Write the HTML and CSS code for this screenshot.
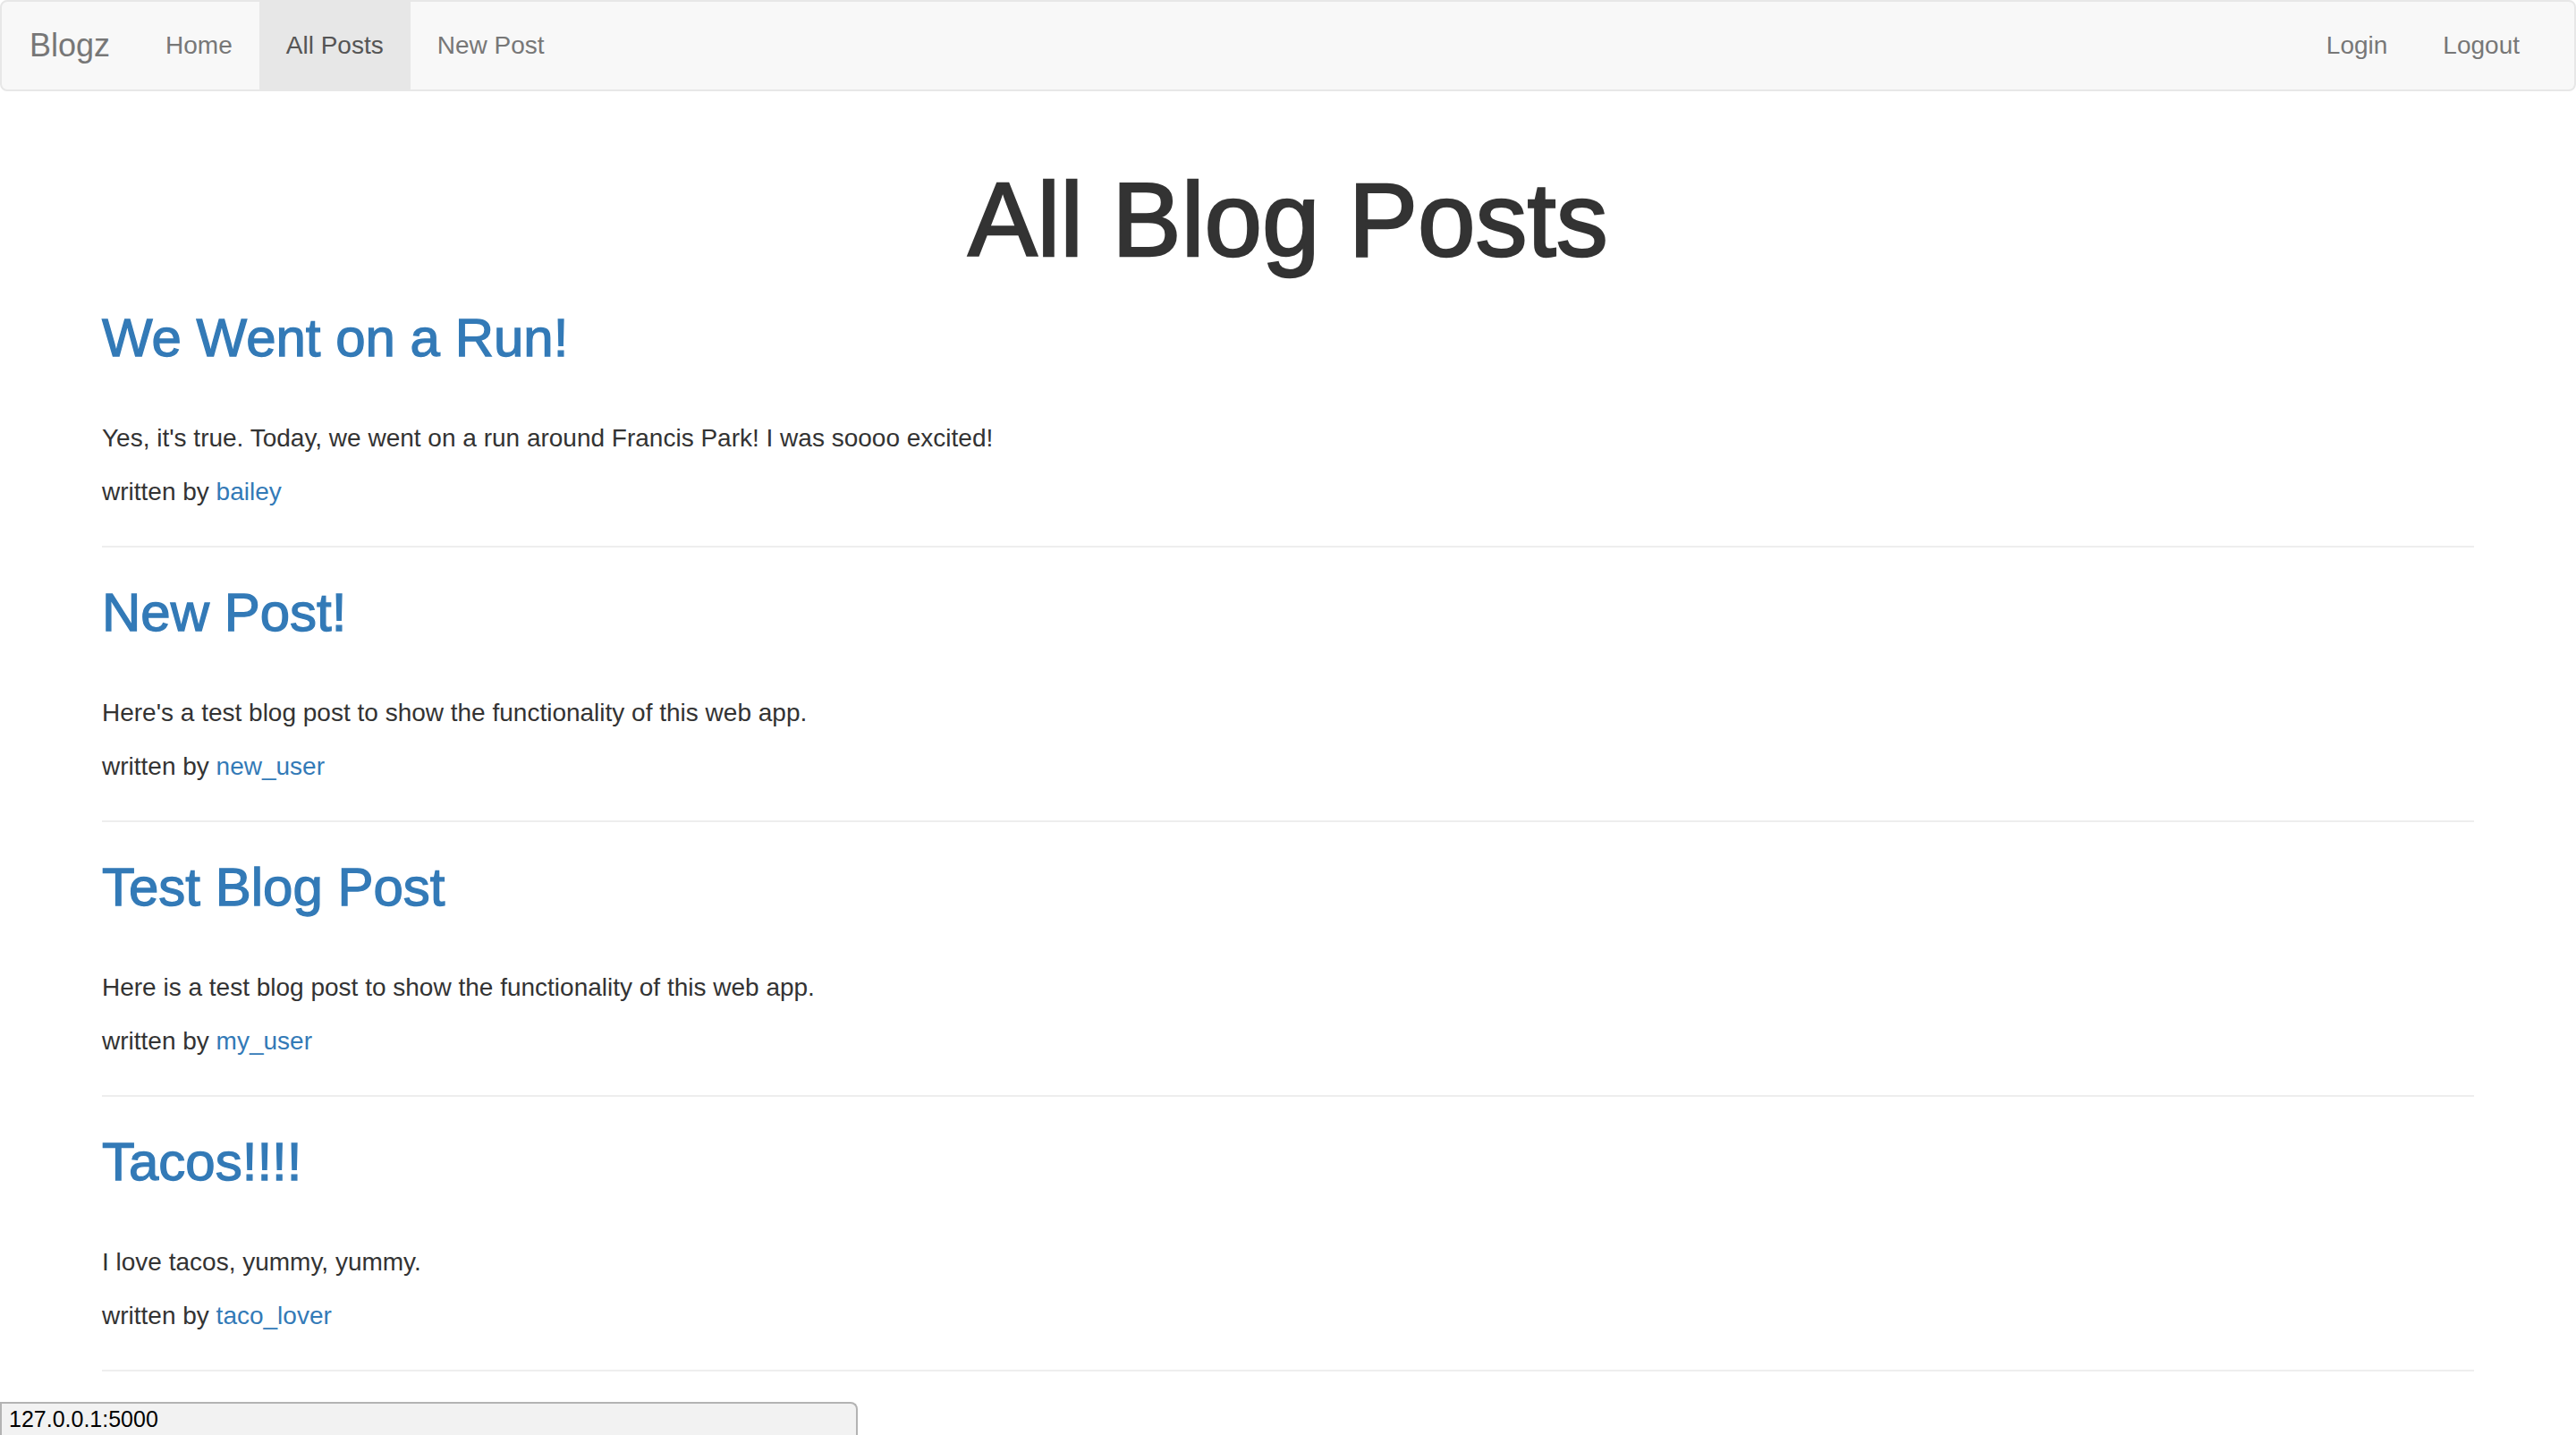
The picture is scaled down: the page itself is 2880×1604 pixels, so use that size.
FILE: index.html
```
<!DOCTYPE html>
<html lang="en">
<head>
<meta charset="utf-8">
<title>Blogz</title>
<link rel="stylesheet" href="styles.css">
</head>
<body>
<nav class="navbar">
  <ul class="nav nav-left">
    <li><a class="brand" href="#">Blogz</a></li>
    <li><a class="nav-link" href="#">Home</a></li>
    <li><a class="nav-link active" href="#">All Posts</a></li>
    <li><a class="nav-link" href="#">New Post</a></li>
  </ul>
  <ul class="nav nav-right">
    <li><a class="nav-link" href="#">Login</a></li>
    <li><a class="nav-link" href="#">Logout</a></li>
  </ul>
</nav>
<main class="container">
  <h1 class="page-title">All Blog Posts</h1>

  <h2 class="post-title"><a href="#">We Went on a Run!</a></h2>
  <p>Yes, it's true. Today, we went on a run around Francis Park! I was soooo excited!</p>
  <p>written by <a href="#">bailey</a></p>
  <hr>

  <h2 class="post-title"><a href="#">New Post!</a></h2>
  <p>Here's a test blog post to show the functionality of this web app.</p>
  <p>written by <a href="#">new_user</a></p>
  <hr>

  <h2 class="post-title"><a href="#">Test Blog Post</a></h2>
  <p>Here is a test blog post to show the functionality of this web app.</p>
  <p>written by <a href="#">my_user</a></p>
  <hr>

  <h2 class="post-title"><a href="#">Tacos!!!!</a></h2>
  <p>I love tacos, yummy, yummy.</p>
  <p>written by <a href="#">taco_lover</a></p>
  <hr>
</main>
<div class="status-bubble">127.0.0.1:5000</div>
</body>
</html>
```
FILE: styles.css
```
html, body {
  margin: 0;
  padding: 0;
  background: #fff;
}
body {
  font-family: "Liberation Sans", Arial, Helvetica, sans-serif;
  font-size: 28px;
  line-height: 40px;
  color: #333;
}
a {
  color: #337ab7;
  text-decoration: none;
}

.navbar {
  display: flex;
  justify-content: space-between;
  height: 102px;
  box-sizing: border-box;
  background: #f8f8f8;
  border: 2px solid #e7e7e7;
  border-radius: 8px;
}
.nav {
  display: flex;
  list-style: none;
  margin: 0;
  padding: 0;
}
.nav-right {
  padding-right: 30px;
}
.brand {
  display: block;
  padding: 29px 32px 29px 31px;
  font-size: 36px;
  line-height: 40px;
  color: #777;
}
.nav-link {
  display: block;
  padding: 29px 30px;
  font-size: 28px;
  line-height: 40px;
  color: #777;
}
.nav-right .nav-link {
  padding: 29px 31px;
}
.nav-link.active {
  color: #555;
  background: #e7e7e7;
}

.container {
  padding: 40px 114px 0;
}
.page-title {
  margin: 41px 0 20px;
  font-size: 116px;
  line-height: 1.1;
  font-weight: 500;
  text-align: center;
  color: #333;
  -webkit-text-stroke: 2.4px #333;
}
.post-title {
  margin: 34px 0 59px;
  font-size: 60px;
  line-height: 1.1;
  font-weight: 500;
}
.post-title a {
  -webkit-text-stroke: 1.3px #337ab7;
}
p {
  margin: 0 0 20px;
}
hr {
  height: 0;
  margin: 40px 0;
  border: 0;
  border-top: 2px solid #eee;
}

.status-bubble {
  position: fixed;
  left: 0;
  bottom: 0;
  width: 959px;
  height: 37px;
  box-sizing: border-box;
  padding: 0 8px;
  background: #f2f2f2;
  border: 2px solid #b3b3b3;
  border-bottom: 0;
  border-radius: 0 8px 0 0;
  font-family: "Liberation Sans", Arial, sans-serif;
  font-size: 25px;
  line-height: 35px;
  color: #000;
}
```
